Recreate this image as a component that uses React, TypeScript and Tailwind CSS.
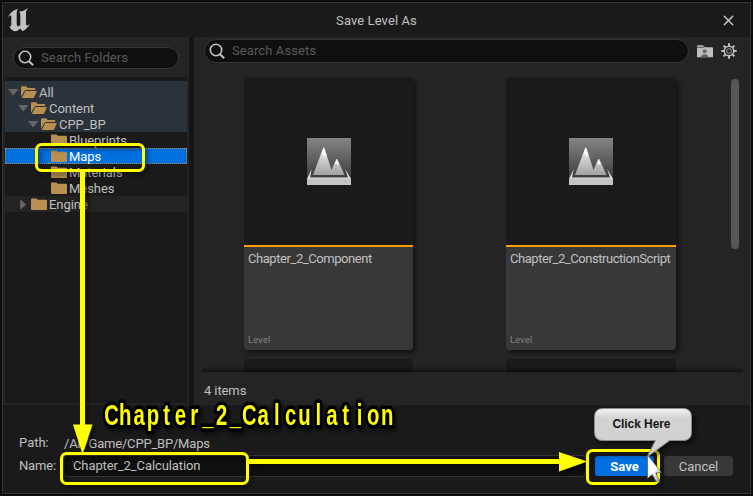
import { X } from "lucide-react";

function SearchGlyph() {
  return (
    <svg width="17" height="17" viewBox="0 0 17 17" fill="none" stroke="#c4c4c4" className="shrink-0">
      <circle cx="7" cy="7" r="5.7" strokeWidth="1.6" />
      <path d="M11 11.2l4.2 4" strokeWidth="1.9" />
    </svg>
  );
}

function Folder({ open = false }: { open?: boolean }) {
  return (
    <svg width="17" height="13" viewBox="0 0 17 13" fill="#b9904f" className="shrink-0">
      {open ? (
        <>
          <path d="M0 11V1.2Q0 .3 1 .3h4.2l1.5 1.6h6.5q1 0 1 1v1.2H5Q4 4.100 3.400 5z" />
          <path d="M4.300 5.100H16L12.800 12H.8z" />
        </>
      ) : (
        <path d="M0 11.200V1.200Q0 .5 .8 .5h4.700l1.300 1.300h8.400q.8 0 .8.8v8.600q0 .8-.8.8H.8Q0 12 0 11.200zM6 2.900h10v.7H6z" />
      )}
    </svg>
  );
}

type RowProps = { label: string; pad: string; arrow?: "down" | "right"; open?: boolean; row?: string };

function TreeRow({ label, pad, arrow, open, row = "" }: RowProps) {
  return (
    <div className={`flex h-4 items-center ${pad} ${row}`}>
      <span className="w-[13px] shrink-0">
        {arrow && (
          <svg width="11" height="11" viewBox="0 0 11 11" fill="#64676a">
            {arrow === "down" ? <path d="M0 2h10.500L5.200 8.400z" /> : <path d="M2.200.2l6 5.300-6 5.300z" />}
          </svg>
        )}
      </span>
      <Folder open={open} />
      <span className="ml-px pt-[2px] tracking-[-0.05px]">{label}</span>
    </div>
  );
}

function LevelIcon({ id }: { id: string }) {
  return (
    <svg width="44" height="47" viewBox="0 0 44 47">
      <defs>
        <linearGradient id={`${id}-sky`} x1="0" y1="0" x2="0" y2="1">
          <stop offset="0" stopColor="#858585" />
          <stop offset="1" stopColor="#303030" />
        </linearGradient>
        <linearGradient id={`${id}-peak`} x1="0" y1="0" x2="0" y2="1">
          <stop offset="0" stopColor="#fff" />
          <stop offset=".35" stopColor="#d6d6d6" />
          <stop offset="1" stopColor="#a2a2a2" />
        </linearGradient>
      </defs>
      <rect width="44" height="47" fill={`url(#${id}-sky)`} />
      <path d="M6 37L16 10.500q.8-2 1.600 0L24.500 32l4.300-10q1-2.300 2 0L37.500 37z" fill={`url(#${id}-peak)`} />
      <path d="M16.500 10l-2.300 7 2-1.500 1 4 1.500-3 1.300 1.500zM29.700 21.500l-2 5 1.800-1 1 1.500 1.300-1z" fill="#fff" />
      <path d="M0 41L4.700 31 3 39.500h38L38.200 31 44 41z" fill="#e4e4e4" />
      <path d="M0 40.500h44V47H0z" fill="#c3c3c3" />
    </svg>
  );
}

function AssetCard({ name, id }: { name: string; id: string }) {
  return (
    <div className="flex h-[273px] flex-col overflow-hidden rounded-[4px] bg-[#383838] shadow-[3px_3px_4px_rgba(0,0,0,0.45)]">
      <div className="flex h-[170px] items-center justify-center border-b-2 border-[#ff9c00] bg-[#1a1a1a]">
        <LevelIcon id={id} />
      </div>
      <div className="mt-[3px] ml-1 text-[13px] leading-[18px] tracking-[-0.44px] whitespace-nowrap">{name}</div>
      <div className="mt-auto mb-[3px] ml-1 text-[9px] leading-[13px] tracking-[0.35px] text-[#858585]">Level</div>
    </div>
  );
}

const CALLOUT = "Chapter_2_Calculation";

function Annotations() {
  return (
    <svg
      width="753"
      height="496"
      viewBox="0 0 753 496"
      className="pointer-events-none absolute top-0 left-0 [font-family:'Liberation_Sans',sans-serif]"
    >
      <defs>
        <linearGradient id="bubble" x1="0" y1="0" x2="0" y2="1">
          <stop offset="0" stopColor="#f4f4f4" />
          <stop offset=".2" stopColor="#d3d3d3" />
          <stop offset="1" stopColor="#d0d0d0" />
        </linearGradient>
        <linearGradient id="cursor" x1="0" y1="0" x2="1" y2="1">
          <stop offset=".5" stopColor="#fff" />
          <stop offset="1" stopColor="#999" />
        </linearGradient>
        <filter id="soft" x="-20%" y="-20%" width="150%" height="150%">
          <feDropShadow dx="3" dy="3" stdDeviation="2.500" floodColor="#000" floodOpacity=".55" />
        </filter>
      </defs>
      <g filter="url(#soft)" fill="none" stroke="#ff0" strokeWidth="3">
        <rect x="36.500" y="144.500" width="107" height="26" rx="5" />
        <rect x="61.500" y="453.500" width="186" height="30" rx="5" />
        <rect x="587.500" y="450.500" width="71" height="33" rx="5" />
        <path d="M82.500 171v256M249 461.500h312" strokeWidth="5" />
        <path d="M73 424.500h19.500L82.500 454zM559 452v19.500l28-10z" fill="#ff0" stroke="none" />
      </g>
      <g
        transform="scale(.7 1)"
        fontSize="29"
        fontWeight="700"
        textAnchor="middle"
        fill="#ff0"
        stroke="#000"
        strokeWidth="7"
        strokeLinejoin="round"
        className="[paint-order:stroke]"
        filter="url(#soft)"
      >
        <text x={CALLOUT.split("").map((_, i) => (111.500 + i * 13.780) / 0.7).join(" ")} y="425.500">
          {CALLOUT}
        </text>
      </g>
      <g filter="url(#soft)">
        <path
          d="M603 408.500h80q8.500 0 8.500 8.500v15q0 8.500-8.500 8.500h-13.500L647 457l8.500-16.500H603q-8.500 0-8.500-8.500v-15q0-8.500 8.500-8.500z"
          fill="url(#bubble)"
          stroke="#8c8c8c"
        />
      </g>
      <text x="641.500" y="428" fontSize="12" fontWeight="700" textAnchor="middle" fill="#161616" textLength="58">
        Click Here
      </text>
      <path
        d="M647.500 455v23.500l4.700-4 4 7.300 3.200-1.600-3.600-7.200 5.700-.5z"
        fill="url(#cursor)"
        stroke="#444"
        strokeWidth=".6"
      />
    </svg>
  );
}

export default function App() {
  return (
    <div className="relative h-[496px] w-[753px] overflow-hidden bg-[#0b0b0b] px-[2px] pt-[2px] text-[13px] text-[#c0c0c0] [font-family:Roboto,sans-serif]">
      <div className="flex h-[492px] w-[749px] flex-col border border-[#353535] bg-[#1a1a1a]">
        <header className="grid h-[34px] shrink-0 grid-cols-[1fr_auto_1fr] items-center">
          <svg width="24" height="24" viewBox="0 0 24 24" fill="#c2c2c2" className="ml-1">
            <path d="M.5 10.500Q3 3 11 .8 9.700 2.500 9.700 5v11q0 1.500 1 2.300 1.300.4 2.600-1.300V6q-.2-1.700-1.500-2.200Q17 3 21 .2 19 2.500 19 5v11q.3 1.800 1.500 1.600 1.200-.5 2.700-2.600Q21 20.500 15.500 23.200l-2.200-2.700Q11 23.200 7.500 23.200 3.500 21.800 2.400 18.500q1.900.3 1.900-1.500V9.500Q4.300 7.500 3.500 7.300 1.800 7.500.5 10.500z" />
          </svg>
          <h1 className="pt-px tracking-[0.1px]">Save Level As</h1>
          <X size={17} strokeWidth={2} color="#c8c8c8" className="mr-[13px] justify-self-end" />
        </header>

        <div className="flex h-[368px] shrink-0 bg-[#151515]">
          <aside className="flex w-[186px] shrink-0 flex-col bg-[#242424] px-[2px] pb-[2px]">
            <div className="flex h-10 shrink-0 items-center pt-[2px] pl-2">
              <div className="flex h-[22px] w-[166px] items-center rounded-full border border-[#353535] bg-[#0f0f0f] pl-1 text-[#5a5a5a]">
                <SearchGlyph />
                <span className="ml-[6px] tracking-[0.06px]">Search Folders</span>
              </div>
            </div>
            <div className="flex-1 bg-[#1a1a1a] pt-1">
              <div className="bg-[#2b323a] pt-[3px]">
                <TreeRow label="All" pad="pl-[3px]" arrow="down" open />
                <TreeRow label="Content" pad="pl-[13px]" arrow="down" open />
                <TreeRow label="CPP_BP" pad="pl-[23px]" arrow="down" open />
              </div>
              <TreeRow label="Blueprints" pad="pl-[33px]" />
              <TreeRow label="Maps" pad="pl-[32px]" row="bg-[#0070e0] text-white border border-dotted border-[#c78a3c]" />
              <TreeRow label="Materials" pad="pl-[33px]" />
              <TreeRow label="Meshes" pad="pl-[33px]" />
              <TreeRow label="Engine" pad="pl-[13px]" arrow="right" row="bg-[#232323]" />
            </div>
          </aside>

          <main className="ml-[5px] flex flex-1 flex-col bg-[#242424]">
            <div className="mt-[2px] ml-[10px] flex h-6 shrink-0 items-center">
              <div className="flex h-6 w-[485px] items-center rounded-full border border-[#353535] bg-[#0f0f0f] pl-1 text-[#5a5a5a]">
                <SearchGlyph />
                <span className="ml-[6px] tracking-[0.1px]">Search Assets</span>
              </div>
              <svg width="16" height="13" viewBox="0 0 16 13" fill="#bdbdbd" className="ml-2">
                <path d="M0 1q0-.8.8-.8h5l2 2H15q1 0 1 1v9H0z" />
                <path d="M0 2.300h7" stroke="#242424" strokeWidth=".7" />
                <circle cx="7.700" cy="6.300" r="2" fill="#666" />
                <path d="M3.800 12.200q.5-3 3.900-3t3.900 3z" fill="#666" />
              </svg>
              <svg width="16" height="16" viewBox="0 0 16 16" fill="none" stroke="#c0c0c0" className="ml-2">
                <circle cx="8" cy="8" r="4.700" strokeWidth="1.500" />
                <circle cx="8" cy="8" r="2.300" stroke="#777" strokeWidth="1.300" />
                <path d="M8 .3v3M8 12.700v3M.3 8h3M12.700 8h3M2.600 2.600l2 2M11.400 11.400l2 2M2.600 13.400l2-2M11.400 4.600l2-2" strokeWidth="2" />
              </svg>
            </div>
            <div className="relative flex h-[309px] shrink-0 overflow-hidden pt-[14px]">
              <div className="ml-[50px] grid h-fit grid-cols-[169px_170px] gap-x-[93px] gap-y-[9px]">
                <AssetCard name="Chapter_2_Component" id="a" />
                <AssetCard name="Chapter_2_ConstructionScript" id="b" />
                <div className="h-8 rounded-[4px] bg-[#1a1a1a]" />
                <div className="h-8 rounded-[4px] bg-[#1a1a1a]" />
              </div>
              <div className="mt-[2px] ml-[55px] h-[170px] w-2 rounded-full bg-[#575757]" />
              <div className="absolute bottom-0 left-2 h-[6px] w-[541px] bg-linear-to-t from-black/50 to-transparent" />
            </div>
            <footer className="flex flex-1 items-center pt-[4px] pl-[10px] tracking-[-0.1px]">4 items</footer>
          </main>
        </div>

        <div className="flex flex-1 flex-col pt-[26px] pl-4">
          <div className="flex h-6 items-center">
            <span className="w-[45px]">Path:</span>
            <span className="pt-[2px] tracking-[-0.2px]">/All/Game/CPP_BP/Maps</span>
          </div>
          <div className="flex h-[22px] items-center">
            <span className="w-[44px] tracking-[-0.15px]">Name:</span>
            <div className="flex h-[22px] w-[523px] items-center rounded-[4px] border border-[#353535] bg-[#0f0f0f] pl-[9px] tracking-[-0.1px]">
              Chapter_2_Calculation
            </div>
            <button className="ml-[9px] flex h-5 w-[59px] items-center justify-center rounded-[3px] bg-[#0070e0] pt-px font-bold text-white">
              Save
            </button>
            <button className="ml-[10px] flex h-5 w-[69px] items-center justify-center rounded-[3px] bg-[#383838] pt-px">
              Cancel
            </button>
          </div>
        </div>
      </div>
      <Annotations />
    </div>
  );
}
